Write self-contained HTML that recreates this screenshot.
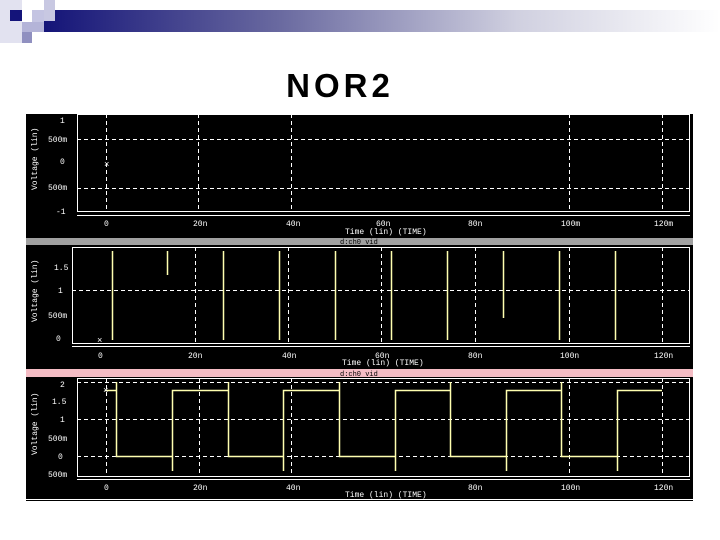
<!DOCTYPE html>
<html><head><meta charset="utf-8"><style>
html,body{margin:0;padding:0;background:#fff;width:720px;height:540px;overflow:hidden}
svg{display:block}
</style></head><body>
<svg width="720" height="540" viewBox="0 0 720 540" xmlns="http://www.w3.org/2000/svg" font-family="Liberation Mono, monospace">
<defs>
<linearGradient id="g" x1="0" x2="1" y1="0" y2="0">
<stop offset="0" stop-color="#141478"/><stop offset="0.35" stop-color="#6a6aa0"/><stop offset="0.7" stop-color="#d0d0e0"/><stop offset="1" stop-color="#ffffff"/>
</linearGradient>
</defs>
<rect x="44" y="10" width="676" height="22" fill="url(#g)"/>
<rect x="0" y="0" width="22" height="43" fill="#e2e2f0"/>
<rect x="10" y="10" width="12" height="11" fill="#14147a"/>
<rect x="22" y="22" width="22" height="10" fill="#b4b4d8"/>
<rect x="32" y="10" width="12" height="12" fill="#c4c4e2"/>
<rect x="44" y="0" width="11" height="21" fill="#c8c8e2"/>
<rect x="22" y="32" width="10" height="11" fill="#9090c0"/>
<text x="340" y="97" font-family="Liberation Sans, sans-serif" font-weight="bold" font-size="33" text-anchor="middle" letter-spacing="4">NOR2</text>

<rect x="26" y="114" width="667" height="387" fill="#000"/>
<g stroke="#fff" fill="none" stroke-width="1">
<rect x="77.5" y="114.5" width="612" height="97"/>
<line x1="77" y1="215.5" x2="690" y2="215.5"/>
<g stroke-dasharray="4,3">
<line x1="77" y1="139.5" x2="690" y2="139.5"/><line x1="77" y1="188.5" x2="690" y2="188.5"/>
<line x1="106.5" y1="114" x2="106.5" y2="212"/><line x1="198.5" y1="114" x2="198.5" y2="212"/><line x1="291.5" y1="114" x2="291.5" y2="212"/><line x1="569.5" y1="114" x2="569.5" y2="212"/><line x1="662.5" y1="114" x2="662.5" y2="212"/>
</g>
<rect x="72.5" y="247.5" width="617" height="96"/>
<line x1="72" y1="346.5" x2="690" y2="346.5"/>
<g stroke-dasharray="4,3">
<line x1="72" y1="290.5" x2="690" y2="290.5"/>
<line x1="195.5" y1="247" x2="195.5" y2="344"/><line x1="288.5" y1="247" x2="288.5" y2="344"/><line x1="381.5" y1="247" x2="381.5" y2="344"/><line x1="475.5" y1="247" x2="475.5" y2="344"/><line x1="569.5" y1="247" x2="569.5" y2="344"/><line x1="662.5" y1="247" x2="662.5" y2="344"/>
</g>
<rect x="77.5" y="378.5" width="612" height="98"/>
<line x1="77" y1="479.5" x2="690" y2="479.5"/>
<line x1="26" y1="499.5" x2="693" y2="499.5"/>
<g stroke-dasharray="4,3">
<line x1="77" y1="382.5" x2="690" y2="382.5"/><line x1="77" y1="419.5" x2="690" y2="419.5"/><line x1="77" y1="456.5" x2="690" y2="456.5"/>
<line x1="106.5" y1="378" x2="106.5" y2="477"/><line x1="199.5" y1="378" x2="199.5" y2="477"/><line x1="291.5" y1="378" x2="291.5" y2="477"/><line x1="569.5" y1="378" x2="569.5" y2="477"/><line x1="662.5" y1="378" x2="662.5" y2="477"/>
</g>
</g>
<rect x="26" y="238" width="667" height="7" fill="#a0a0a0"/>
<rect x="26" y="369" width="667" height="8" fill="#f4bcc4"/>
<g stroke="#ffffb0" stroke-width="1.5" fill="none">
<path d="M112.5 251V340M167.5 251V275M223.5 251V340M279.5 251V340M335.5 251V340M391.5 251V340M447.5 251V340M503.5 251V318M559.5 251V340M615.5 251V340"/>
<path d="M105 390.5H116.5V382V456.5H172.5V471V390.5H228.5V382V456.5H283.5V471V390.5H339.5V382V456.5H395.5V471V390.5H450.5V382V456.5H506.5V471V390.5H561.5V382V456.5H617.5V471V390.5H662"/>
</g>
<g fill="#fff" font-size="8">
<text x="60" y="123">1</text><text x="48" y="142">500m</text><text x="60" y="164">0</text><text x="48" y="190">500m</text><text x="56" y="214">-1</text>
<text x="104" y="226">0</text><text x="193" y="226">20n</text><text x="286" y="226">40n</text><text x="376" y="226">60n</text><text x="468" y="226">80n</text><text x="561" y="226">100m</text><text x="654" y="226">120m</text>
<text x="345" y="234">Time (lin) (TIME)</text>
<text x="54" y="270">1.5</text><text x="58" y="293">1</text><text x="48" y="318">500m</text><text x="56" y="341">0</text>
<text x="98" y="358">0</text><text x="188" y="358">20n</text><text x="282" y="358">40n</text><text x="375" y="358">60n</text><text x="468" y="358">80n</text><text x="560" y="358">100n</text><text x="654" y="358">120n</text>
<text x="342" y="365">Time (lin) (TIME)</text>
<text x="60" y="387">2</text><text x="52" y="404">1.5</text><text x="60" y="422">1</text><text x="48" y="441">500m</text><text x="58" y="459">0</text><text x="48" y="477">500m</text>
<text x="104" y="490">0</text><text x="193" y="490">20n</text><text x="286" y="490">40n</text><text x="468" y="490">80n</text><text x="561" y="490">100n</text><text x="654" y="490">120n</text>
<text x="345" y="497">Time (lin) (TIME)</text>
<text x="340" y="244" fill="#000" font-size="7">d:ch0 vid</text>
<text x="340" y="376" fill="#000" font-size="7">d:ch0 vid</text>
<text x="104" y="167" font-size="9">×</text><text x="97" y="343" font-size="9">×</text><text x="103" y="393" font-size="9">×</text>
</g>
<g fill="#fff" font-size="8">
<text transform="translate(37,190) rotate(-90)">Voltage (lin)</text>
<text transform="translate(37,322) rotate(-90)">Voltage (lin)</text>
<text transform="translate(37,455) rotate(-90)">Voltage (lin)</text>
</g>
</svg>
</body></html>
